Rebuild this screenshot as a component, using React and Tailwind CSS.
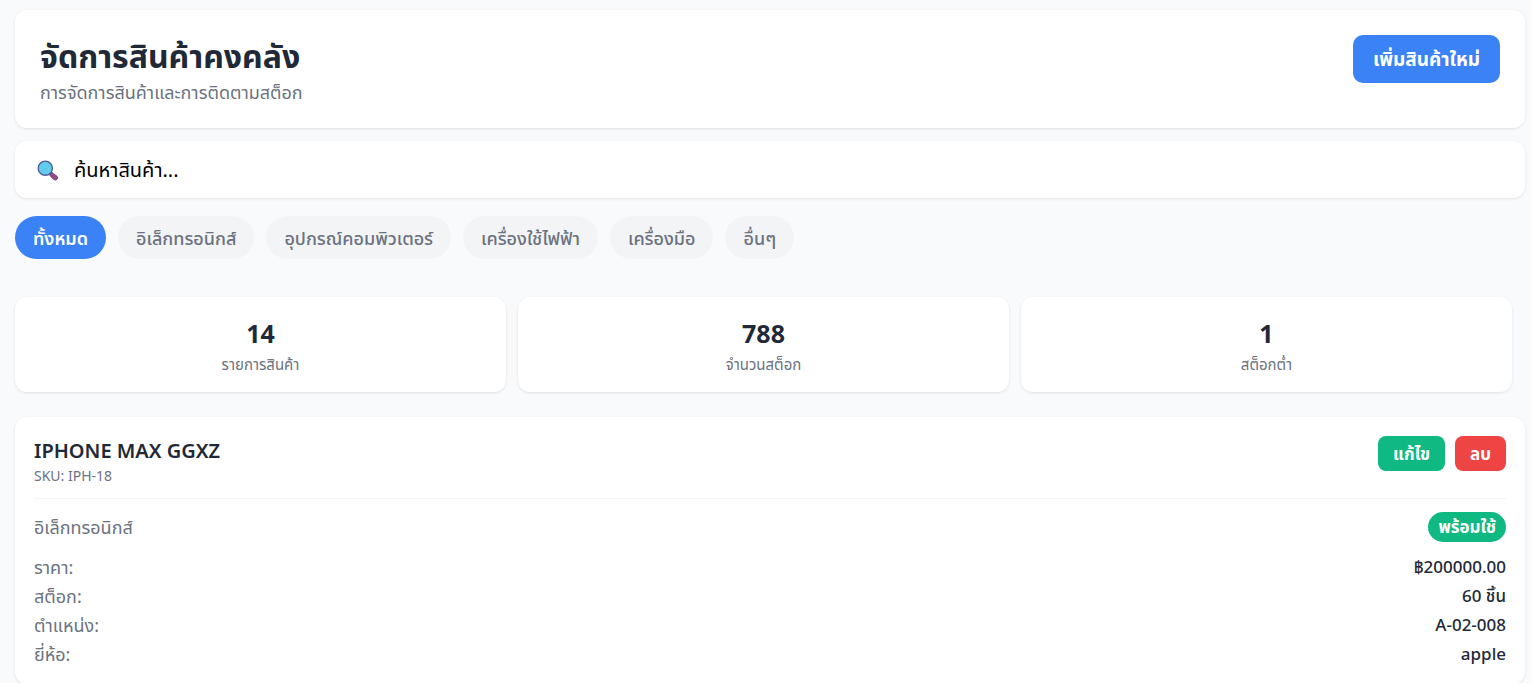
const card = "rounded-xl bg-white shadow-[0_1px_3px_rgba(0,0,0,0.1)]";

const categories = [
  "ทั้งหมด",
  "อิเล็กทรอนิกส์",
  "อุปกรณ์คอมพิวเตอร์",
  "เครื่องใช้ไฟฟ้า",
  "เครื่องมือ",
  "อื่นๆ",
];

const stats = [
  { value: "14", label: "รายการสินค้า" },
  { value: "788", label: "จำนวนสต็อก" },
  { value: "1", label: "สต็อกต่ำ" },
];

const details = [
  { label: "ราคา:", value: "฿200000.00" },
  { label: "สต็อก:", value: "60 ชิ้น" },
  { label: "ตำแหน่ง:", value: "A-02-008" },
  { label: "ยี่ห้อ:", value: "apple" },
];

function SearchIcon() {
  return (
    <svg className="size-[22px] shrink-0" viewBox="0 0 22 22" aria-hidden="true">
      <path d="M12 14.6 14.4 12.4l1.8 1.8-2.2 2.2z" fill="#3f4f8f" />
      <path d="M13.4 17.2a1.9 1.9 0 0 1 2.7-2.8l3.9 2.9a2.2 2.2 0 0 1-3 3.2z" fill="#8f4d8a" stroke="#75407a" strokeWidth="1" strokeLinejoin="round" />
      <circle cx="8.3" cy="9.2" r="7.1" fill="#62cdea" stroke="#4c5c96" strokeWidth="1.4" />
    </svg>
  );
}

function Pill({ children, active }) {
  return (
    <button
      type="button"
      aria-pressed={active}
      className={
        active
          ? "h-[43px] rounded-full bg-[#3b82f6] px-[18px] text-lg font-semibold text-white"
          : "h-[43px] rounded-full bg-[#f3f4f6] px-[18px] text-lg font-medium text-[#6b7280]"
      }
    >
      {children}
    </button>
  );
}

function Product() {
  return (
    <article className={`${card} mt-[25px] px-[19px] pt-[19px] pb-[18px]`}>
      <div className="flex items-start justify-between border-b border-[#f3f4f6] pb-3">
        <div>
          <h2 className="text-xl leading-[30px] font-semibold text-[#1f2937]">IPHONE MAX GGXZ</h2>
          <p className="text-sm leading-5 text-[#6b7280]">SKU: IPH-18</p>
        </div>
        <div className="flex gap-[10px]">
          <button type="button" className="h-[35px] rounded-lg bg-[#10b981] px-[15px] text-[17px] font-bold text-white">แก้ไข</button>
          <button type="button" className="h-[35px] rounded-lg bg-[#ef4444] px-[15px] text-[17px] font-bold text-white">ลบ</button>
        </div>
      </div>
      <div className="my-[13px] flex items-center justify-between">
        <span className="text-lg leading-6 text-[#6b7280]">อิเล็กทรอนิกส์</span>
        <span className="rounded-full bg-[#10b981] px-[10px] text-[17px] leading-[30px] font-bold text-white">พร้อมใช้</span>
      </div>
      <dl className="flex flex-col gap-[5px]">
        {details.map((d) => (
          <div key={d.label} className="flex justify-between leading-6">
            <dt className="text-lg leading-6 text-[#6b7280]">{d.label}</dt>
            <dd className="text-[17px] leading-6 font-medium text-[#1f2937]">{d.value}</dd>
          </div>
        ))}
      </dl>
    </article>
  );
}

export default function App() {
  return (
    <main lang="th" className="min-h-screen bg-[#f9fafb] pt-[10px] pr-[6px] pl-[15px] font-['Noto_Sans','Noto_Sans_Thai',sans-serif]">
      <header className={`${card} flex items-start justify-between p-[25px]`}>
        <div>
          <h1 className="text-[32px] leading-[42px] font-bold text-[#1f2937]">จัดการสินค้าคงคลัง</h1>
          <p className="mt-1 text-lg leading-[22px] text-[#6b7280]">การจัดการสินค้าและการติดตามสต็อก</p>
        </div>
        <button type="button" className="h-12 rounded-[10px] bg-[#3b82f6] px-5 text-[19px] font-bold text-white">เพิ่มสินค้าใหม่</button>
      </header>

      <label className={`${card} mt-[13px] flex h-[57px] items-center gap-[15px] px-[22px]`}>
        <SearchIcon />
        <input
          type="text"
          aria-label="ค้นหาสินค้า"
          placeholder="ค้นหาสินค้า..."
          className="min-w-0 flex-1 bg-transparent text-xl text-black outline-none placeholder:text-black"
        />
      </label>

      <nav className="mt-[18px] flex flex-wrap gap-3">
        {categories.map((name, i) => (
          <Pill key={name} active={i === 0}>{name}</Pill>
        ))}
      </nav>

      <section className="mt-[38px] mr-[13px] grid grid-cols-3 gap-3">
        {stats.map((s) => (
          <div key={s.label} className={`${card} flex h-[95px] flex-col items-center pt-[17px]`}>
            <strong className="text-[25px] leading-[38px] font-bold text-[#1f2937]">{s.value}</strong>
            <span className="text-[15px] leading-6 text-[#6b7280]">{s.label}</span>
          </div>
        ))}
      </section>

      <Product />
    </main>
  );
}
